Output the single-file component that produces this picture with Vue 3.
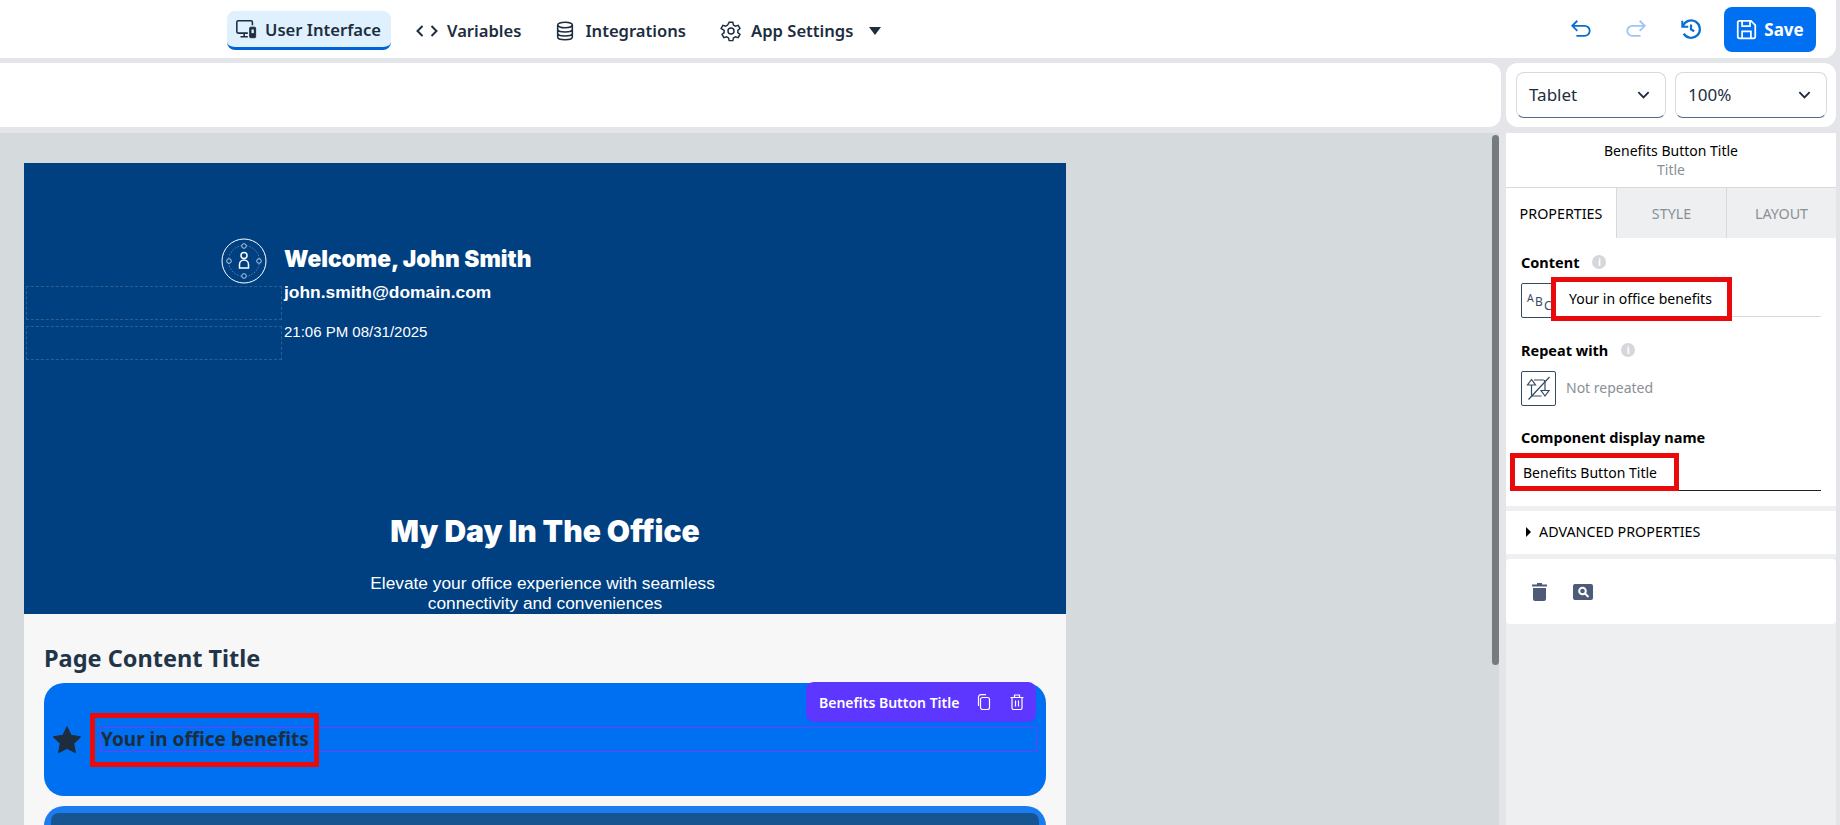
<script setup>
const navItems = [
  { key: 'vars', label: 'Variables' },
  { key: 'int', label: 'Integrations' },
  { key: 'app', label: 'App Settings' }
]
</script>

<template>
  <div class="app">
    <header class="topbar">
      <nav class="nav">
        <div class="tab active">
          <svg class="nav-ico" viewBox="0 0 24 24" fill="none" stroke="#1d2d3e" stroke-width="1.700"><path d="M14 16.500H3.500A1.500 1.500 0 0 1 2 15V4.500A1.500 1.500 0 0 1 3.500 3h14A1.500 1.500 0 0 1 19 4.500V8"/><path d="M6 20.500h8M10 16.500v4"/><rect x="16" y="10" width="6.500" height="11.500" rx="1" fill="#1d2d3e" stroke-width="1"/><rect x="18" y="12.500" width="2.500" height="4" fill="#dff1ff" stroke="none"/></svg>
          <span>User Interface</span>
        </div>
        <div class="tab vars">
          <svg class="code" width="22" height="14" viewBox="0 0 22 14" fill="none" stroke="#1d2d3e" stroke-width="2"><path d="M6.500 2L1.500 7l5 5M15.500 2l5 5-5 5"/></svg>
          <span>{{ navItems[0].label }}</span>
        </div>
        <div class="tab ints">
          <svg class="nav-ico" viewBox="0 0 24 24" fill="none" stroke="#1d2d3e" stroke-width="1.700"><ellipse cx="12" cy="5.500" rx="8" ry="3"/><path d="M4 5.500v13c0 1.700 3.600 3 8 3s8-1.300 8-3v-13M4 10c0 1.700 3.600 3 8 3s8-1.300 8-3M4 14.500c0 1.700 3.600 3 8 3s8-1.300 8-3"/></svg>
          <span>{{ navItems[1].label }}</span>
        </div>
        <div class="tab apps">
          <svg class="nav-ico" viewBox="0 0 24 24" fill="none" stroke="#1d2d3e" stroke-width="1.600"><path d="M10 2.500h4l.7 3 2.100 1.200 3-.9 2 3.400-2.300 2.100v2.400l2.300 2.100-2 3.400-3-.9-2.100 1.200-.7 3h-4l-.7-3-2.100-1.200-3 .9-2-3.400 2.300-2.100v-2.400L1.200 9.200l2-3.400 3 .9 2.100-1.200z"/><circle cx="12" cy="12" r="3.300"/></svg>
          <span>{{ navItems[2].label }}</span>
          <i class="caret"></i>
        </div>
      </nav>
      <div class="actions">
        <svg class="act" viewBox="0 0 24 24" fill="none" stroke="#0a6ed1" stroke-width="2"><path d="M8 3L2.500 8.500 8 14M3 8.500h13a5.500 5.500 0 0 1 0 11H7"/></svg>
        <svg class="act" viewBox="0 0 24 24" fill="none" stroke="#9cc6f5" stroke-width="2"><path d="M16 3l5.500 5.500L16 14M21 8.500H8a5.500 5.500 0 0 0 0 11h9"/></svg>
        <svg class="act" viewBox="0 0 24 24" fill="none" stroke="#0a6ed1" stroke-width="2.400"><path d="M3.200 9A9.500 9.500 0 1 1 4 17"/><path d="M2.500 3v6.500H9" stroke-width="2.200"/><path d="M12 7v5.500l3.500 2"/></svg>
        <button class="save">
          <svg width="21" height="21" viewBox="0 0 24 24" fill="none" stroke="#fff" stroke-width="2"><path d="M4 2h13l5 5v13a2 2 0 0 1-2 2H4a2 2 0 0 1-2-2V4a2 2 0 0 1 2-2z"/><path d="M7 2v6h9V2M7 22v-8h10v8"/></svg>
          <span>Save</span>
        </button>
      </div>
    </header>

    <section class="row2">
      <div class="blank"></div>
      <div class="selects">
        <div class="select w1"><span>Tablet</span><svg width="15" height="15" viewBox="0 0 16 16" fill="none" stroke="#1d2d3e" stroke-width="2"><path d="M2.500 5.500L8 11l5.500-5.500"/></svg></div>
        <div class="select w2"><span>100%</span><svg width="15" height="15" viewBox="0 0 16 16" fill="none" stroke="#1d2d3e" stroke-width="2"><path d="M2.500 5.500L8 11l5.500-5.500"/></svg></div>
      </div>
    </section>

    <main class="work">
      <div class="canvas">
        <div class="frame">
          <div class="hero">
            <div class="profile">
              <div class="pleft">
                <svg class="avatar" viewBox="0 0 46 46" fill="none" stroke="#fff">
                  <circle cx="23" cy="23" r="22" stroke-width="1"/>
                  <circle cx="23" cy="23" r="15.500" stroke-width=".5" stroke-dasharray="1.500 1.500" opacity=".7"/>
                  <circle cx="23" cy="8" r="2.300" stroke-width=".7" fill="#004081"/>
                  <circle cx="23" cy="38" r="2.300" stroke-width=".7" fill="#004081"/>
                  <circle cx="8" cy="23" r="2.300" stroke-width=".7" fill="#004081"/>
                  <circle cx="38" cy="23" r="2.300" stroke-width=".7" fill="#004081"/>
                  <circle cx="23" cy="17.500" r="3" stroke-width="1.500"/>
                  <path d="M18.500 30v-3.500a4.500 4.500 0 0 1 9 0V30z" stroke-width="1.500"/>
                </svg>
                <div class="dash first"></div>
                <div class="dash"></div>
              </div>
              <div class="pright">
                <div class="welcome">Welcome, John Smith</div>
                <div class="email">john.smith@domain.com</div>
                <div class="date">21:06 PM 08/31/2025</div>
              </div>
            </div>
            <h1 class="title">My Day In The Office</h1>
            <p class="sub">Elevate your office experience with seamless&nbsp;<br />connectivity and conveniences</p>
          </div>
          <div class="content">
            <h2 class="pct">Page Content Title</h2>
            <div class="btn1">
              <svg class="star" viewBox="0 0 24 24" fill="#1d2d3e"><path d="M12 .8l3.500 7.300 8 1.100-5.800 5.600 1.400 8L12 19l-7.100 3.800 1.400-8L.5 9.200l8-1.100z" stroke="#1d2d3e" stroke-linejoin="round"/></svg>
              <div class="tline"><span>Your in office benefits</span></div>
              <div class="redbox rb-main"></div>
              <div class="toolbar">
                <span>Benefits Button Title</span>
                <svg width="15" height="16" viewBox="0 0 15 16" fill="none" stroke="#fff" stroke-width="1.200"><rect x="4.500" y="3.500" width="9" height="12" rx="2"/><path d="M2.500 12V3a2.300 2.300 0 0 1 2.300-2.300H10"/></svg>
                <svg width="14" height="16" viewBox="0 0 14 16" fill="none" stroke="#fff" stroke-width="1.200"><path d="M.5 3.500h13M4.500 3.500V1h5v2.500M2 3.500V14a1.500 1.500 0 0 0 1.500 1.500h7A1.500 1.500 0 0 0 12 14V3.500M5.500 6.500v6M8.500 6.500v6"/></svg>
              </div>
            </div>
            <div class="btn2"><div class="btn2in"></div></div>
          </div>
        </div>
        <div class="scroll"><div class="thumb"></div></div>
      </div>

      <aside class="panel">
        <div class="phead">
          <div class="pname">Benefits Button Title</div>
          <div class="ptype">Title</div>
        </div>
        <div class="ptabs">
          <div class="ptab on">PROPERTIES</div>
          <div class="ptab">STYLE</div>
          <div class="ptab">LAYOUT</div>
        </div>
        <div class="pbody">
          <div class="lab l1">Content <i class="info">i</i></div>
          <div class="field">
            <div class="ibox abc"><span class="a">A</span><span class="b">B</span><span class="c">C</span></div>
            <div class="finput">Your in office benefits</div>
            <div class="redbox rb-content"></div>
          </div>
          <div class="lab l2">Repeat with <i class="info">i</i></div>
          <div class="rfield">
            <div class="ibox">
              <svg width="33" height="33" viewBox="0 0 33 33" fill="none" stroke="#354a5f" stroke-width="1.200"><path d="M9.500 7.500L5.500 13h8zM9.500 13v9c0 1.500 1 2 2 2h8"/><path d="M23 24l-4-5.500h8zM23 18.500V10c0-1.500-1-2-2-2h-9"/><path d="M6.500 27.500L27.500 5"/></svg>
            </div>
            <span class="nr">Not repeated</span>
          </div>
          <div class="lab l3">Component display name</div>
          <div class="dname">
            <span>Benefits Button Title</span>
            <div class="redbox rb-name"></div>
          </div>
        </div>
        <div class="adv"><i class="advc"></i>ADVANCED PROPERTIES</div>
        <div class="tools">
          <svg width="15" height="18" viewBox="0 0 15 18" fill="#4d5b78"><path d="M5 0h5v1.500h5V3.500H0V1.500h5zM1 5h13v11a2 2 0 0 1-2 2H3a2 2 0 0 1-2-2z"/></svg>
          <svg width="20" height="16" viewBox="0 0 20 16"><rect width="20" height="16" rx="2" fill="#4d5b78"/><circle cx="9.500" cy="7" r="3.300" fill="none" stroke="#fff" stroke-width="2"/><path d="M12 9.500l3.500 3.500" stroke="#fff" stroke-width="2"/></svg>
        </div>
      </aside>
    </main>
  </div>
</template>

<style>
html, body { margin: 0; overflow: hidden; background: #edeff0; }
</style>

<style scoped>
.app { width: 1840px; height: 825px; display: flex; flex-direction: column; background: #e3e5e9; font-family: "Noto Sans", sans-serif; color: #1d2d3e; overflow: hidden; }
.topbar { height: 58px; box-sizing: border-box; width: 1836px; background: #fff; border-bottom-right-radius: 12px; display: flex; justify-content: space-between; padding-left: 227px; padding-right: 20px; flex: none; }
.nav { display: flex; align-items: flex-start; padding-top: 11px; }
.tab { display: flex; align-items: center; height: 39px; box-sizing: border-box; font-size: 16.600px; font-weight: 600; white-space: nowrap; }
.tab.active { width: 164px; padding: 0 0 0 8px; background: #dff1ff; border-radius: 8px; border-bottom: 3px solid #0064d9; gap: 8px; height: 39px; }
.nav-ico { width: 22px; height: 22px; flex: none; }
.code { flex: none; }
.vars { margin-left: 25px; gap: 9px; }
.ints { margin-left: 33px; gap: 9px; }
.apps { margin-left: 34px; gap: 9px; }
.caret { width: 0; height: 0; border-left: 6px solid transparent; border-right: 6px solid transparent; border-top: 8px solid #1d2d3e; margin-left: 7px; }
.actions { display: flex; align-items: center; }
.act { width: 22px; height: 22px; margin-right: 33px; }
.act:nth-child(3) { margin-right: 22px; }
.save { width: 92px; height: 45px; background: #0070f2; border: 0; border-radius: 8px; color: #fff; display: flex; align-items: center; justify-content: center; gap: 7px; font: 700 17px "Noto Sans", sans-serif; padding: 0; }

.row2 { height: 64px; margin-top: 5px; display: flex; gap: 5px; flex: none; }
.blank { width: 1501px; background: #fff; border-radius: 0 12px 12px 0; }
.selects { width: 330px; background: #fff; border-radius: 12px; display: flex; align-items: center; padding-left: 10px; gap: 9px; box-sizing: border-box; }
.select { height: 46px; box-sizing: border-box; border: 1px solid #d5dadd; border-bottom: 1.500px solid #556b82; border-radius: 8px; display: flex; align-items: center; justify-content: space-between; padding: 0 14px 2px 12px; font-size: 17px; }
.w1 { width: 150px; }
.w2 { width: 152px; }

.work { flex: 1; display: flex; margin-top: 6px; min-height: 0; }
.canvas { width: 1499px; background: #d5dadd; display: flex; padding: 30px 0 0 24px; box-sizing: border-box; position: relative; overflow: hidden; }
.frame { width: 1042px; flex: none; }
.hero { height: 451px; background: #004081; color: #fff; overflow: hidden; }
.profile { display: grid; grid-template-columns: 257px 1fr; }
.pleft { padding: 75px 0 0 2px; }
.avatar { display: block; width: 46px; height: 46px; margin: 0 0 0 195px; }
.dash { height: 34px; width: 256px; box-sizing: border-box; border: 1px dashed #2f5f92; margin-top: 6px; }
.dash.first { margin-top: 2px; }
.pright { padding: 0 0 0 3px; }
.welcome { font-family: Inter, sans-serif; font-size: 22.700px; font-weight: 900; line-height: 30px; margin-top: 81px; white-space: nowrap; }
.email { font: 700 17.400px/20px "Liberation Sans", sans-serif; margin-top: 8px; }
.date { font: 400 15px/20px "Liberation Sans", sans-serif; margin-top: 20px; }
.title { font-family: Inter, sans-serif; font-size: 30px; font-weight: 900; line-height: 36px; margin: 153px 0 0; text-align: center; }
.sub { font: 400 17.300px/20px "Liberation Sans", sans-serif; margin: 24px 0 0; text-align: center; }
.content { background: #f7f7f7; padding: 30px 20px 0 20px; height: 250px; box-sizing: border-box; }
.pct { margin: 0; font-size: 23.500px; font-weight: 700; line-height: 28px; color: #223548; }
.btn1 { position: relative; height: 113px; margin-top: 11px; background: #0070f2; border-radius: 20px; display: flex; align-items: center; }
.star { width: 28px; height: 28px; margin-left: 9px; flex: none; }
.tline { margin-left: 19px; width: 937px; flex: none; height: 25px; box-sizing: border-box; border: 1px solid #6f3bff; font-size: 19px; font-weight: 700; line-height: 22px; white-space: nowrap; color: #1d2d3e; }
.redbox { position: absolute; box-sizing: border-box; border: 5px solid #e90b0b; pointer-events: none; }
.rb-main { left: 46px; top: 30px; width: 229px; height: 54px; }
.toolbar { position: absolute; right: 10px; top: -1px; width: 230px; height: 40px; box-sizing: border-box; background: #5d36ff; border-radius: 8px; color: #fff; display: flex; align-items: center; padding-left: 13px; font-size: 14px; font-weight: 600; }
.toolbar svg:nth-of-type(1) { margin-left: 17px; }
.toolbar svg:nth-of-type(2) { margin-left: 19px; }
.btn2 { margin-top: 10px; background: #1b7bf0; border-radius: 20px 20px 0 0; padding: 7px 7px 0; height: 40px; box-sizing: border-box; }
.btn2in { background: #16558f; height: 100%; border-radius: 8px 8px 0 0; }
.scroll { position: absolute; left: 1492px; top: 2px; width: 7px; }
.thumb { height: 530px; background: #767b7b; border-radius: 4px; }

.panel { width: 330px; margin-left: 7px; display: flex; flex-direction: column; gap: 5px; background: #edeff0; }
.phead { height: 55px; background: #fff; text-align: center; font-size: 14px; line-height: 19px; padding-top: 8px; box-sizing: border-box; border-bottom: 1px solid #d9d9d9; color: #000; }
.ptype { color: #8b8f96; }
.ptabs { display: flex; height: 50px; margin-top: -5px; }
.ptab { width: 110px; background: #edeff0; color: #8b8f96; font-size: 14.300px; display: flex; align-items: center; justify-content: center; border-left: 1px solid #d9d9d9; box-sizing: border-box; }
.ptab.on { background: #fff; color: #000; border-left: 0; }
.pbody { margin-top: -5px; background: #fff; height: 268px; box-sizing: border-box; padding: 0 15px; position: relative; }
.lab { font-size: 14.500px; font-weight: 700; color: #000; display: flex; align-items: center; line-height: 20px; }
.info { width: 14px; height: 14px; border-radius: 50%; background: #d5d7da; color: #fff; font: 700 10px/14px "Noto Sans", sans-serif; text-align: center; margin-left: 13px; }
.l1 { padding-top: 14px; }
.field { position: relative; display: flex; margin-top: 11px; width: 300px; }
.ibox { width: 35px; height: 35px; box-sizing: border-box; border: 1px solid #354a5f; border-radius: 2px; flex: none; display: flex; align-items: center; justify-content: center; background: #fff; }
.abc { font-size: 12px; color: #354a5f; position: relative; }
.abc span { position: absolute; line-height: 12px; }
.a { left: 5px; top: 8px; font-size: 10.500px; }
.b { left: 13px; top: 12px; }
.c { left: 22px; top: 16px; }
.finput { flex: 1; height: 33px; border-bottom: 1px solid #d9d9d9; padding-left: 13px; font-size: 14px; color: #000; line-height: 32px; }
.rb-content { left: 30px; top: -6px; width: 181px; height: 44px; }
.l2 { margin-top: 22px; }
.rfield { display: flex; align-items: center; margin-top: 11px; }
.nr { margin: -3px 0 0 10px; font-size: 14px; color: #8b8f96; }
.l3 { margin-top: 21px; }
.dname { position: relative; margin: 6px 0 0 -11px; width: 311px; height: 38px; box-sizing: border-box; border-bottom: 1.500px solid #222; font-size: 14px; color: #000; padding: 10px 0 0 13px; }
.rb-name { left: 0; top: 0; width: 169px; height: 38px; }
.adv { height: 43px; background: #fff; display: flex; align-items: center; font-size: 14.300px; color: #000; padding: 0 0 2px 20px; box-sizing: border-box; }
.advc { width: 0; height: 0; border-top: 5px solid transparent; border-bottom: 5px solid transparent; border-left: 5px solid #000; margin-right: 8px; }
.tools { height: 65px; background: #fff; border-radius: 4px; display: flex; align-items: center; padding-left: 26px; gap: 26px; box-sizing: border-box; }
</style>
